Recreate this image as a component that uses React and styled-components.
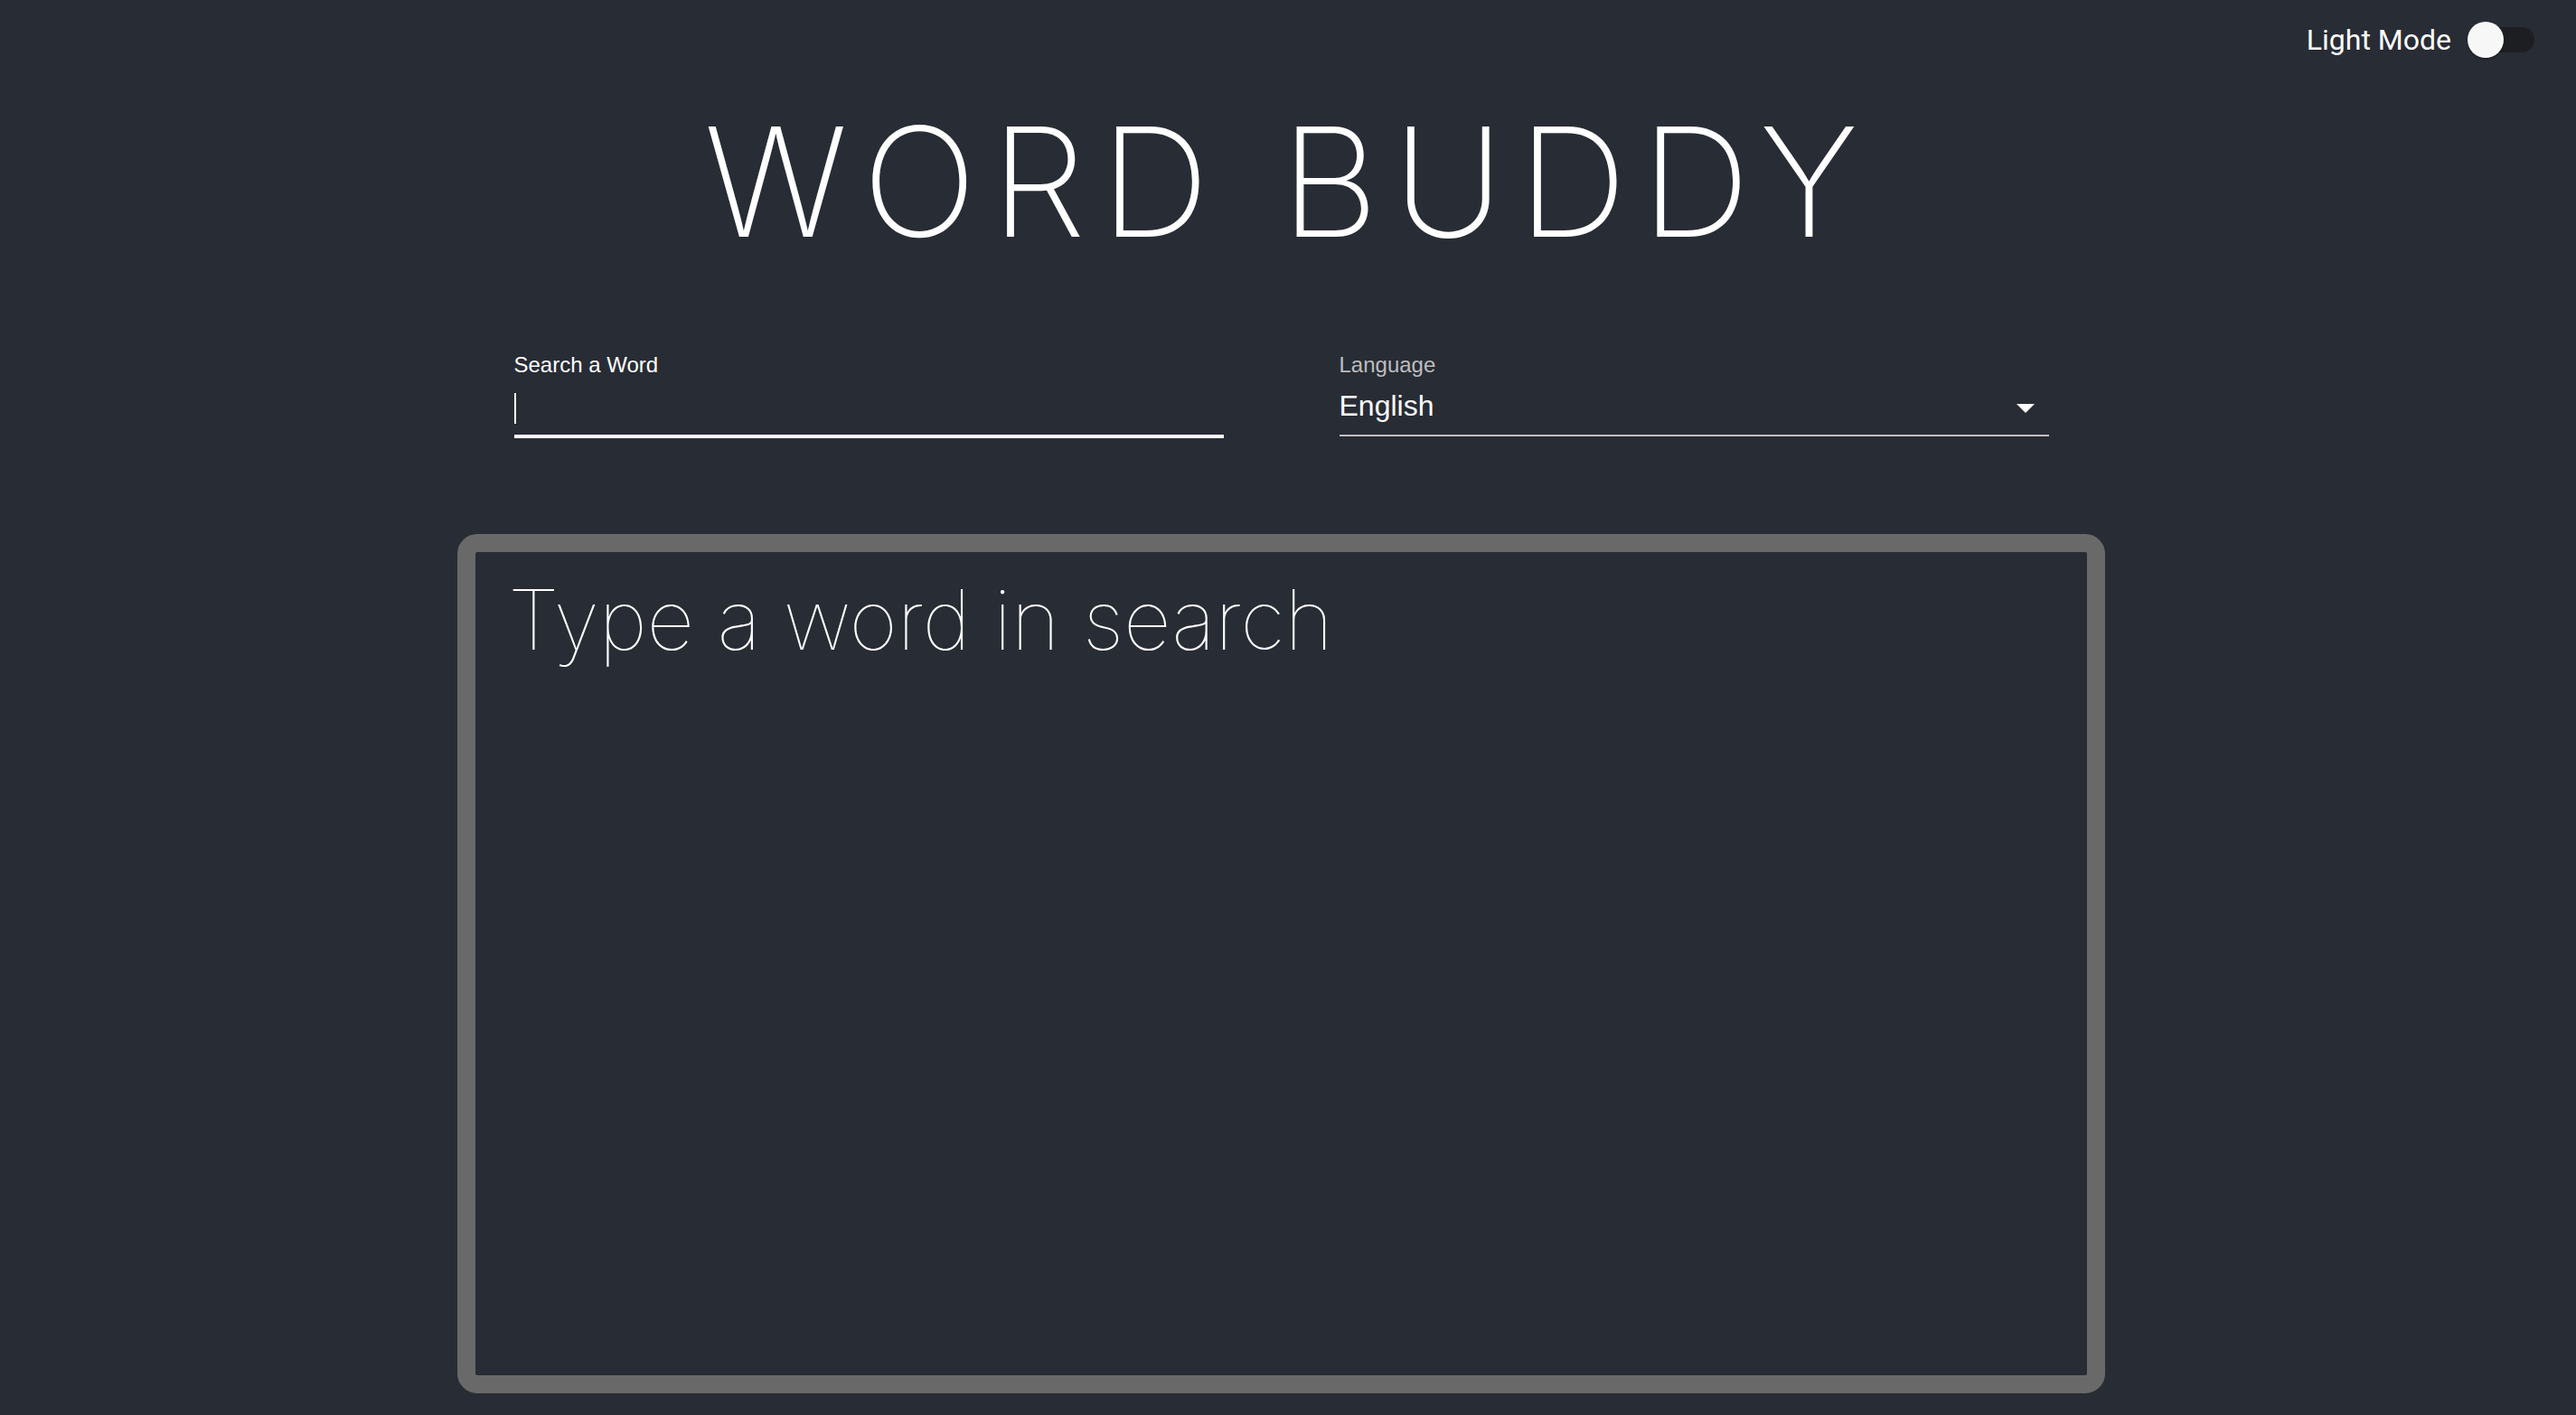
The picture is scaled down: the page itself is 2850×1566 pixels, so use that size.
import React from 'react';
import styled, { createGlobalStyle } from 'styled-components';

const GlobalStyle = createGlobalStyle`
  html, body {
    margin: 0;
    padding: 0;
    background-color: #282c34;
  }
  body {
    font-family: Roboto, "Liberation Sans", sans-serif;
    color: #fff;
  }
`;

const Page = styled.div`
  min-height: 100vh;
  display: flex;
  flex-direction: column;
  background-color: #282c34;
`;

const TopBar = styled.div`
  height: 88px;
  display: flex;
  align-items: center;
  justify-content: flex-end;
  padding-right: 22px;
`;

const ModeLabel = styled.span`
  font-family: Roboto, sans-serif;
  font-size: 32px;
  color: #fff;
`;

const SwitchRoot = styled.div`
  width: 116px;
  height: 76px;
  display: flex;
  align-items: center;
  justify-content: flex-start;
  padding-left: 18px;
  box-sizing: border-box;
  position: relative;
`;

const Track = styled.div`
  position: absolute;
  left: 24px;
  top: 24px;
  width: 68px;
  height: 28px;
  border-radius: 14px;
  background-color: #1c1e22;
`;

const Thumb = styled.div`
  position: relative;
  width: 40px;
  height: 40px;
  border-radius: 50%;
  background-color: #f7f7f7;
  box-shadow: 0 2px 2px rgba(0, 0, 0, 0.25);
`;

const Content = styled.div`
  width: 1823px;
  margin: 0 auto;
  padding-right: 15px;
  display: flex;
  flex-direction: column;
  align-items: center;
`;

const Title = styled.h1`
  margin: 29px 0 0;
  padding-left: 16px;
  font-family: Inter, sans-serif;
  font-weight: 200;
  font-size: 168px;
  line-height: 1;
  letter-spacing: 16px;
  color: #fff;
  white-space: nowrap;
`;

const Fields = styled.div`
  width: 1698px;
  margin-top: 105px;
  display: flex;
  justify-content: space-between;
`;

const Field = styled.div`
  width: 785px;
  display: flex;
  flex-direction: column;
`;

const FieldLabel = styled.label`
  font-family: "Liberation Sans", Arial, sans-serif;
  font-size: 24px;
  line-height: 28px;
  color: ${p => (p.$focused ? '#ffffff' : 'rgba(255,255,255,0.7)')};
`;

const InputRow = styled.div`
  height: 63px;
  display: flex;
  align-items: flex-end;
  justify-content: space-between;
  border-bottom: ${p => (p.$focused ? '4px solid #ffffff' : '2px solid rgba(255,255,255,0.7)')};
  margin-bottom: ${p => (p.$focused ? '0' : '2px')};
`;

const Caret = styled.span`
  width: 2px;
  height: 34px;
  background-color: #fff;
  margin-bottom: 12px;
`;

const Value = styled.span`
  font-family: "Liberation Sans", Arial, sans-serif;
  font-size: 32px;
  line-height: 40px;
  color: #fff;
  margin-bottom: 12px;
`;

const Arrow = styled.svg`
  width: 48px;
  height: 48px;
  margin-right: 2px;
  margin-bottom: 6px;
  fill: #fff;
`;

const Board = styled.div`
  width: 1823px;
  height: 951px;
  margin-top: 106px;
  box-sizing: border-box;
  border: 20px solid #696969;
  border-radius: 22px;
  padding: 20px 36px;
`;

const Placeholder = styled.div`
  font-family: Inter, sans-serif;
  font-weight: 100;
  font-size: 92px;
  line-height: 1.2;
  letter-spacing: -0.3px;
  color: #fff;
`;

export default function App() {
  return (
    <Page>
      <GlobalStyle />
      <TopBar>
        <ModeLabel>Light Mode</ModeLabel>
        <SwitchRoot>
          <Track />
          <Thumb />
        </SwitchRoot>
      </TopBar>
      <Content>
        <Title>WORD BUDDY</Title>
        <Fields>
          <Field>
            <FieldLabel $focused>Search a Word</FieldLabel>
            <InputRow $focused>
              <Caret />
            </InputRow>
          </Field>
          <Field>
            <FieldLabel>Language</FieldLabel>
            <InputRow>
              <Value>English</Value>
              <Arrow viewBox="0 0 24 24">
                <path d="M7 10l5 5 5-5z" />
              </Arrow>
            </InputRow>
          </Field>
        </Fields>
        <Board>
          <Placeholder>Type a word in search</Placeholder>
        </Board>
      </Content>
    </Page>
  );
}
